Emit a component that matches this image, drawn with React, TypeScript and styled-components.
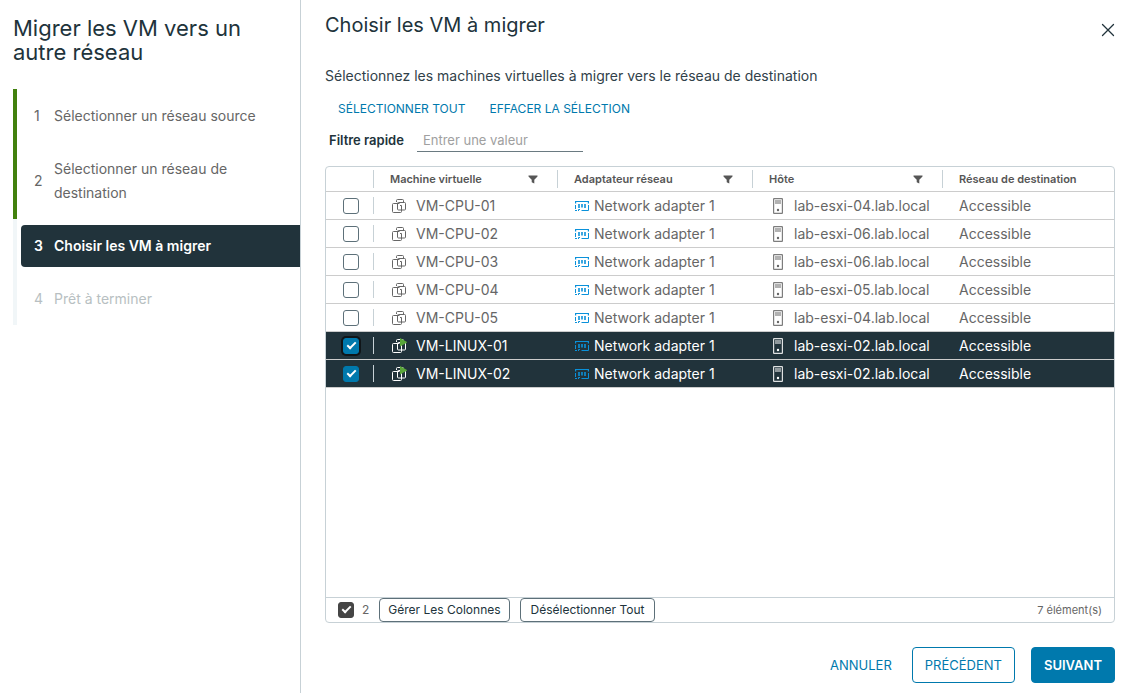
import React, { useState } from "react";
import styled, { createGlobalStyle, css } from "styled-components";

const GlobalStyle = createGlobalStyle`
  *, *::before, *::after { box-sizing: border-box; }
  body {
    margin: 0;
    background: #fff;
    color: #21333b;
    font-family: Inter, "Liberation Sans", sans-serif;
    font-size: 14px;
    line-height: 24px;
  }
  button, input { font-family: inherit; }
`;

const Wizard = styled.div`
  display: flex;
  min-height: 100vh;
`;

const Sidebar = styled.aside`
  flex: 0 0 301px;
  padding: 16px 0 0 13px;
  border-right: 1px solid #c7d1d6;
`;

const WizardTitle = styled.h1`
  margin: 0 24px 25px 0;
  font-size: 22px;
  line-height: 24px;
  font-weight: 400;
`;

const StepList = styled.ol`
  margin: 0;
  padding: 0;
  list-style: none;
`;

type StepState = "done" | "current" | "todo";

const StepItem = styled.li<{ $done: boolean }>`
  padding: 6px 0 5px 4px;
  border-left: 4px solid ${(p) => (p.$done ? "#42810e" : "#f1f6f8")};
`;

const StepButton = styled.button<{ $state: StepState }>`
  display: flex;
  align-items: center;
  width: 100%;
  padding: 9px 32px 9px 13px;
  border: 0;
  border-radius: 4px 0 0 4px;
  background: none;
  color: #666;
  font-size: 14px;
  line-height: 24px;
  text-align: left;
  ${(p) => p.$state === "current" && css`
    background: #21333b;
    color: #fff;
    font-weight: 600;
  `}
  ${(p) => p.$state === "todo" && css`color: #b8bfc2;`}
`;

const StepNumber = styled.span`
  flex: 0 0 20px;
`;

const Main = styled.main`
  display: flex;
  flex: 1;
  flex-direction: column;
  min-width: 0;
  padding: 13px 16px 10px 24px;
`;

const Header = styled.header`
  display: flex;
  justify-content: space-between;
  height: 51px;
`;

const PageTitle = styled.h2`
  margin: 0;
  font-size: 20px;
  line-height: 24px;
  font-weight: 400;
`;

const CloseButton = styled.button`
  display: flex;
  align-self: flex-start;
  padding: 10px 0;
  border: 0;
  background: none;
  color: #21333b;
`;

const Description = styled.p`
  margin: 0 0 9px;
  color: #314149;
  font-size: 14px;
`;

const LinkBar = styled.div`
  display: flex;
  gap: 24px;
  margin-bottom: 7px;
  padding-left: 13px;
`;

const LinkButton = styled.button<{ $large?: boolean }>`
  padding: 0;
  border: 0;
  background: none;
  color: #0079ad;
  font-size: ${(p) => (p.$large ? 13 : 12)}px;
  line-height: 24px;
  text-transform: uppercase;
`;

const FilterRow = styled.div`
  display: flex;
  gap: 13px;
  margin-bottom: 14px;
  padding-left: 4px;
`;

const FilterLabel = styled.label`
  font-size: 13px;
  font-weight: 600;
`;

const FilterInput = styled.input`
  width: 166px;
  height: 24px;
  padding: 0 6px;
  border: 0;
  border-bottom: 1px solid #6a7a81;
  background: none;
  color: #21333b;
  font-size: 13px;
  outline: none;
  &::placeholder { color: #a0a0a0; }
`;

const Grid = styled.section`
  display: flex;
  flex: 1;
  flex-direction: column;
  border: 1px solid #c7d1d6;
  border-radius: 4px;
`;

const GridBody = styled.div`
  flex: 1;
`;

const Table = styled.table`
  width: 100%;
  table-layout: fixed;
  border-collapse: separate;
  border-spacing: 0;
`;

const HeadCell = styled.th`
  height: 25px;
  padding: 0;
  border-bottom: 1px solid #ccc;
  color: #565656;
  font-size: 11px;
  font-weight: 600;
  line-height: 18px;
  text-align: left;
`;

const HeadContent = styled.div<{ $last?: boolean }>`
  display: flex;
  align-items: center;
  justify-content: space-between;
  height: 18px;
  padding: 0 19px 0 16px;
  border-right: 1px solid ${(p) => (p.$last ? "transparent" : "#c7d1d6")};
`;

const Row = styled.tr<{ $selected: boolean }>`
  background: ${(p) => (p.$selected ? "#21333b" : "#fff")};
  color: ${(p) => (p.$selected ? "#fff" : "#666")};
`;

const Cell = styled.td`
  height: 28px;
  padding: 0 0 0 16px;
  border-bottom: 1px solid #ccc;
  line-height: 20px;
  white-space: nowrap;
`;

const CheckCell = styled(Cell)`
  padding: 0;
`;

const CheckBoxHolder = styled.div`
  display: flex;
  align-items: center;
  height: 17px;
  padding-left: 17px;
  border-right: 1px solid #c7d1d6;
`;

const CheckBox = styled.input<{ $dark?: boolean; $ring?: boolean }>`
  display: grid;
  flex: none;
  place-items: center;
  width: 16px;
  height: 16px;
  margin: 0;
  appearance: none;
  border: 1px solid #5d7079;
  border-radius: 3px;
  background: #fff;
  &:checked {
    border-color: ${(p) => (p.$dark ? "#454545" : "#0079ad")};
    background: ${(p) => (p.$dark ? "#454545" : "#0079ad")};
  }
  &:checked::after {
    content: "";
    width: 9px;
    height: 5px;
    margin-bottom: 3px;
    border: solid #fff;
    border-width: 0 0 2px 2px;
    transform: rotate(-45deg);
  }
  ${(p) => p.$ring && css`box-shadow: 0 0 0 2px #101518;`}
`;

const CellContent = styled.div<{ $gap: number; $inset?: number }>`
  display: flex;
  align-items: center;
  gap: ${(p) => p.$gap}px;
  padding-left: ${(p) => p.$inset ?? 0}px;
`;

const GridFooter = styled.footer`
  display: flex;
  align-items: center;
  height: 25px;
  padding: 0 12px;
  border-top: 1px solid #c7d1d6;
  color: #666;
  font-size: 11px;
`;

const SelectedCount = styled.label`
  display: flex;
  align-items: center;
  gap: 8px;
  margin-right: 10px;
  font-size: 12px;
`;

const SmallButton = styled.button<{ $roomy?: boolean }>`
  height: 24px;
  margin-right: 10px;
  padding: 0 ${(p) => (p.$roomy ? 10 : 8)}px;
  border: 1px solid #5d7079;
  border-radius: 4px;
  background: #fff;
  color: #21333b;
  font-size: 12px;
  line-height: 20px;
`;

const ItemCount = styled.span`
  margin-left: auto;
`;

const Actions = styled.footer`
  display: flex;
  gap: 16px;
  align-items: center;
  justify-content: flex-end;
  margin-top: 24px;
`;

const CancelButton = styled(LinkButton)`
  margin-right: 4px;
`;

const ActionButton = styled.button<{ $primary?: boolean }>`
  height: 36px;
  padding: 0 12px;
  border: 1px solid #0079ad;
  border-radius: 4px;
  background: ${(p) => (p.$primary ? "#0079ad" : "#fff")};
  color: ${(p) => (p.$primary ? "#fff" : "#0079ad")};
  font-size: 13px;
  font-weight: ${(p) => (p.$primary ? 600 : 400)};
  text-transform: uppercase;
`;

const Icon = styled.svg`
  display: block;
  flex: none;
`;

const CloseIcon = () => (
  <Icon width="14" height="14" viewBox="0 0 14 14" fill="none" stroke="currentColor" strokeWidth="1.3" aria-hidden="true">
    <path d="M1.5 1.5l11 11M12.5 1.5l-11 11" strokeLinecap="round" />
  </Icon>
);

const FilterIcon = () => (
  <Icon width="10" height="10" viewBox="0 0 10 10" fill="#565656" aria-hidden="true">
    <path d="M0.500 1.500h9v1L6.300 5.800V9.500L3.700 8.300V5.800L0.500 2.500z" />
  </Icon>
);

const VmIcon = ({ running }: { running: boolean }) => (
  <Icon width="15" height="16" viewBox="0 0 15 16" fill="none" stroke="currentColor" aria-hidden="true">
    <path d="M4.500 4V2.500a1 1 0 0 1 1-1h5a1 1 0 0 1 1 1V4" />
    <path d="M4.500 5.500h-3a1 1 0 0 0-1 1v7a1 1 0 0 0 1 1h7a1 1 0 0 0 1-1V8.500M3 5.500h4.500" />
    <path d="M5.500 5.500a1 1 0 0 1 1-1h6a1 1 0 0 1 1 1v5.500a1 1 0 0 1-1 1h-6a1 1 0 0 1-1-1z" />
    <path d="M8 7.500h1.500V9" />
    {running && <path d="M8 0v8.500l7.500-4.250z" fill="#5aa63a" stroke="none" />}
  </Icon>
);

const AdapterIcon = () => (
  <Icon width="14" height="12" viewBox="0 0 14 12" fill="none" stroke="#0a91da" aria-hidden="true">
    <path d="M0.600 3.500V1.500h12.800V3.500" strokeWidth="1.200" />
    <path d="M0.500 5v4M13.500 5v5.500H6.500M0 10.500h2M3.500 11V9.500H5" />
    <path d="M4 4v4M7 4v3.500M10 4v4" strokeWidth="1.600" />
  </Icon>
);

const HostIcon = () => (
  <Icon width="10" height="16" viewBox="0 0 10 16" fill="none" stroke="currentColor" aria-hidden="true">
    <rect x="0.600" y="0.600" width="8.800" height="14.800" rx="0.500" strokeWidth="1.200" opacity="0.850" />
    <path d="M2 3h6M2 5h6" strokeWidth="1.100" />
    <circle cx="5" cy="12" r="1.200" fill="currentColor" stroke="none" />
  </Icon>
);

const steps: { label: string; state: StepState }[] = [
  { label: "Sélectionner un réseau source", state: "done" },
  { label: "Sélectionner un réseau de destination", state: "done" },
  { label: "Choisir les VM à migrer", state: "current" },
  { label: "Prêt à terminer", state: "todo" },
];

const columns = ["Machine virtuelle", "Adaptateur réseau", "Hôte", "Réseau de destination"];

const machines = [
  { name: "VM-CPU-01", host: "lab-esxi-04.lab.local", running: false },
  { name: "VM-CPU-02", host: "lab-esxi-06.lab.local", running: false },
  { name: "VM-CPU-03", host: "lab-esxi-06.lab.local", running: false },
  { name: "VM-CPU-04", host: "lab-esxi-05.lab.local", running: false },
  { name: "VM-CPU-05", host: "lab-esxi-04.lab.local", running: false },
  { name: "VM-LINUX-01", host: "lab-esxi-02.lab.local", running: true },
  { name: "VM-LINUX-02", host: "lab-esxi-02.lab.local", running: true },
];

export default function App() {
  const [selected, setSelected] = useState<string[]>(["VM-LINUX-01", "VM-LINUX-02"]);
  const [active, setActive] = useState("VM-LINUX-01");

  const toggle = (name: string) => {
    setActive(name);
    setSelected((list) => (list.includes(name) ? list.filter((n) => n !== name) : [...list, name]));
  };
  const clear = () => setSelected([]);

  return (
    <Wizard>
      <GlobalStyle />
      <Sidebar>
        <WizardTitle>Migrer les VM vers un autre réseau</WizardTitle>
        <StepList>
          {steps.map((step, i) => (
            <StepItem key={step.label} $done={step.state === "done"}>
              <StepButton
                type="button"
                $state={step.state}
                disabled={step.state === "todo"}
                aria-current={step.state === "current" ? "step" : undefined}
              >
                <StepNumber>{i + 1}</StepNumber>
                <span>{step.label}</span>
              </StepButton>
            </StepItem>
          ))}
        </StepList>
      </Sidebar>
      <Main>
        <Header>
          <PageTitle>Choisir les VM à migrer</PageTitle>
          <CloseButton type="button" aria-label="Fermer"><CloseIcon /></CloseButton>
        </Header>
        <Description>Sélectionnez les machines virtuelles à migrer vers le réseau de destination</Description>
        <LinkBar>
          <LinkButton type="button" onClick={() => setSelected(machines.map((m) => m.name))}>Sélectionner tout</LinkButton>
          <LinkButton type="button" onClick={clear}>Effacer la sélection</LinkButton>
        </LinkBar>
        <FilterRow>
          <FilterLabel htmlFor="quick-filter">Filtre rapide</FilterLabel>
          <FilterInput id="quick-filter" type="text" placeholder="Entrer une valeur" />
        </FilterRow>
        <Grid>
          <GridBody>
            <Table>
              <colgroup>
                <col style={{ width: 48 }} />
                <col style={{ width: 184 }} />
                <col style={{ width: 195 }} />
                <col style={{ width: 190 }} />
                <col />
              </colgroup>
              <thead>
                <tr>
                  <HeadCell><HeadContent /></HeadCell>
                  {columns.map((title, i) => (
                    <HeadCell key={title} scope="col">
                      <HeadContent $last={i === columns.length - 1}>
                        {title}
                        {i < columns.length - 1 && <FilterIcon />}
                      </HeadContent>
                    </HeadCell>
                  ))}
                </tr>
              </thead>
              <tbody>
                {machines.map((vm) => {
                  const checked = selected.includes(vm.name);
                  return (
                    <Row key={vm.name} $selected={checked}>
                      <CheckCell>
                        <CheckBoxHolder>
                          <CheckBox
                            type="checkbox"
                            aria-label={vm.name}
                            checked={checked}
                            $ring={checked && active === vm.name}
                            onChange={() => toggle(vm.name)}
                          />
                        </CheckBoxHolder>
                      </CheckCell>
                      <Cell><CellContent $gap={9} $inset={2}><VmIcon running={vm.running} />{vm.name}</CellContent></Cell>
                      <Cell><CellContent $gap={5} $inset={1}><AdapterIcon />Network adapter 1</CellContent></Cell>
                      <Cell><CellContent $gap={11} $inset={4}><HostIcon />{vm.host}</CellContent></Cell>
                      <Cell>Accessible</Cell>
                    </Row>
                  );
                })}
              </tbody>
            </Table>
          </GridBody>
          <GridFooter>
            <SelectedCount>
              <CheckBox type="checkbox" checked={selected.length > 0} $dark onChange={clear} />
              {selected.length}
            </SelectedCount>
            <SmallButton type="button">Gérer Les Colonnes</SmallButton>
            <SmallButton type="button" $roomy onClick={clear}>Désélectionner Tout</SmallButton>
            <ItemCount>{machines.length} élément(s)</ItemCount>
          </GridFooter>
        </Grid>
        <Actions>
          <CancelButton type="button" $large>Annuler</CancelButton>
          <ActionButton type="button">Précédent</ActionButton>
          <ActionButton type="button" $primary>Suivant</ActionButton>
        </Actions>
      </Main>
    </Wizard>
  );
}
